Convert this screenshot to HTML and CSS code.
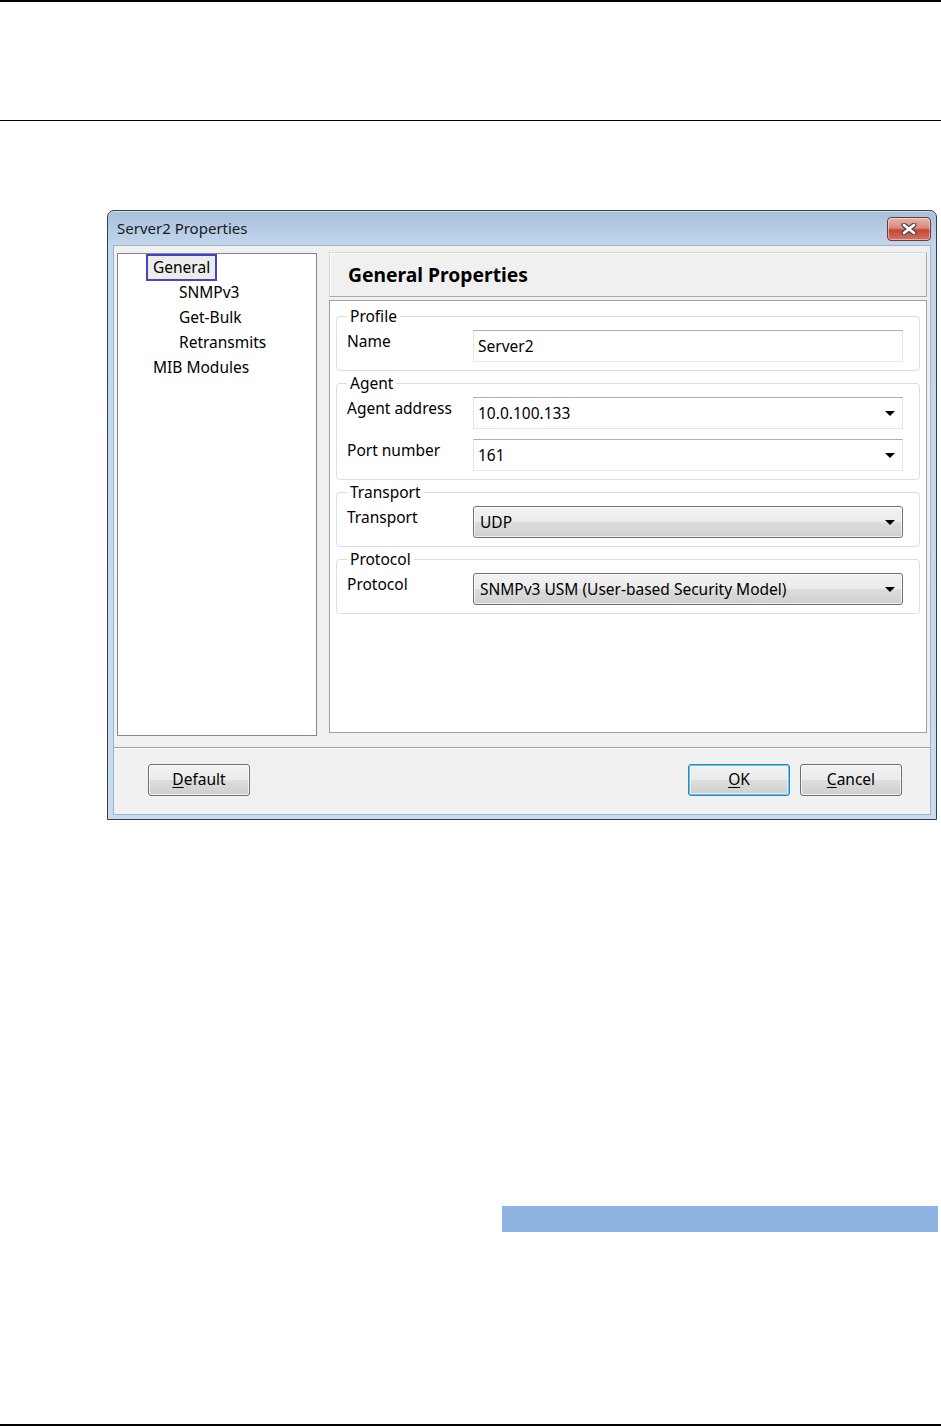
FILE: index.html
```html
<!DOCTYPE html>
<html lang="en">

<head>
  <meta charset="UTF-8" />
  <title>Server2 Properties</title>
  <link rel="stylesheet" href="styles.css">
</head>

<body>
  <div class="page">
    <header class="page-head"></header>

    <div class="figure">
      <div class="window">
        <div class="titlebar">
          <span class="title">Server2 Properties</span>
          <button class="close-btn" aria-label="Close">
            <svg width="18" height="12" viewBox="0 0 18 12">
              <path d="M4 2 L14 10 M14 2 L4 10" stroke="#4b4b4b" stroke-width="5" stroke-linecap="round" />
              <path d="M4 2 L14 10 M14 2 L4 10" stroke="#ffffff" stroke-width="2.6" stroke-linecap="round" />
            </svg>
          </button>
        </div>

        <div class="client">
          <div class="main">
            <ul class="tree">
              <li class="node"><span class="selected">General</span></li>
              <li class="node child"><span>SNMPv3</span></li>
              <li class="node child"><span>Get-Bulk</span></li>
              <li class="node child"><span>Retransmits</span></li>
              <li class="node"><span>MIB Modules</span></li>
            </ul>

            <div class="pane">
              <div class="pane-head">General Properties</div>
              <div class="pane-body">
                <fieldset class="group">
                  <legend>Profile</legend>
                  <div class="row">
                    <label>Name</label>
                    <div class="field">Server2</div>
                  </div>
                </fieldset>

                <fieldset class="group">
                  <legend>Agent</legend>
                  <div class="row">
                    <label>Agent address</label>
                    <div class="field combo">10.0.100.133<span class="arrow"></span></div>
                  </div>
                  <div class="row">
                    <label>Port number</label>
                    <div class="field combo">161<span class="arrow"></span></div>
                  </div>
                </fieldset>

                <fieldset class="group">
                  <legend>Transport</legend>
                  <div class="row">
                    <label>Transport</label>
                    <div class="select">UDP<span class="arrow"></span></div>
                  </div>
                </fieldset>

                <fieldset class="group">
                  <legend>Protocol</legend>
                  <div class="row">
                    <label>Protocol</label>
                    <div class="select">SNMPv3 USM (User-based Security Model)<span class="arrow"></span></div>
                  </div>
                </fieldset>
              </div>
            </div>
          </div>

          <div class="separator"></div>

          <div class="actions">
            <button class="btn"><u>D</u>efault</button>
            <div class="spacer"></div>
            <button class="btn default"><u>O</u>K</button>
            <button class="btn"><u>C</u>ancel</button>
          </div>
        </div>
      </div>
    </div>

    <div class="caption-bar"></div>
  </div>
</body>

</html>
```

FILE: styles.css
```css
* {
  box-sizing: border-box;
}

body {
  margin: 0;
  background: #fff;
  font-family: "Noto Sans", "Open Sans", sans-serif;
  font-size: 15.5px;
  color: #000;
}

.page {
  position: relative;
  width: 941px;
  height: 1426px;
  border-top: 2px solid #000;
  border-bottom: 2px solid #000;
}

.page-head {
  height: 119px;
  border-bottom: 1px solid #000;
}

.figure {
  padding: 89px 0 0 107px;
}

/* window frame */
.window {
  width: 830px;
  height: 610px;
  border: 1px solid #35404c;
  border-radius: 7px 7px 0 0;
  background: linear-gradient(180deg, #a7c0dc 0%, #c2d6ec 34px, #c8dbef 100%);
  padding: 0 5px 4px;
  display: flex;
  flex-direction: column;
  box-shadow: inset 0 1px 0 rgba(255, 255, 255, 0.5);
}

.titlebar {
  height: 34px;
  flex-shrink: 0;
  display: flex;
  align-items: center;
  justify-content: space-between;
  padding-left: 4px;
}

.title {
  color: #1a1a1a;
  font-size: 15px;
}

.close-btn {
  width: 44px;
  height: 24px;
  margin-top: 1px;
  border: 1px solid #6b3a38;
  border-radius: 4px;
  padding: 0;
  display: flex;
  align-items: center;
  justify-content: center;
  background: linear-gradient(180deg, #e9b2a8 0%, #d88a7e 45%, #c2473a 55%, #d5725f 100%);
  box-shadow: inset 0 0 0 1px rgba(255, 255, 255, 0.45);
}

.client {
  flex: 1;
  background: #f0f0f0;
  border: 1px solid #9fb3c8;
  display: flex;
  flex-direction: column;
}

.main {
  display: flex;
  gap: 12px;
  padding: 6px 3px 0 3px;
}

/* tree */
.tree {
  list-style: none;
  margin: 1px 0 0;
  padding: 1px 0 0;
  width: 200px;
  height: 483px;
  background: #fff;
  border: 1px solid #828790;
}

.node {
  height: 25px;
  display: flex;
  align-items: center;
  padding-left: 30px;
}

.node.child {
  padding-left: 56px;
}

.node span {
  padding: 0 5px;
  line-height: 23px;
}

.node .selected {
  background: #ececec;
  outline: 2px solid #4343c9;
  outline-offset: 0;
}

/* right pane */
.pane {
  flex: 1;
  display: flex;
  flex-direction: column;
  gap: 3px;
}

.pane-head {
  height: 45px;
  display: flex;
  align-items: center;
  padding-left: 18px;
  font-size: 19.3px;
  font-weight: 700;
  background: #f0f0f0;
  border: 1px solid #d6d6d6;
  border-right-color: #a9a9a9;
  border-bottom-color: #a9a9a9;
  box-shadow: inset 1px 1px 0 #fff;
}

.pane-body {
  height: 433px;
  background: #fff;
  border: 1px solid #a0a0a0;
  padding: 5px 6px 0;
}

.group {
  margin: 0 0 2px;
  padding: 4px 16px 8px 10px;
  border: 1px solid #d5dfe5;
  border-radius: 4px;
  display: flex;
  flex-direction: column;
  gap: 10px;
}

.group legend {
  padding: 0 3px;
  line-height: 20px;
}

.row {
  display: flex;
  align-items: flex-start;
}

.row label {
  width: 126px;
  flex-shrink: 0;
}

.field {
  position: relative;
  flex: 1;
  height: 32px;
  display: flex;
  align-items: center;
  padding-left: 4px;
  border: 1px solid #e2e3ea;
  border-top-color: #abadb3;
  border-bottom-color: #e3e9ef;
  background: #fff;
}

.select {
  position: relative;
  flex: 1;
  height: 32px;
  display: flex;
  align-items: center;
  padding-left: 6px;
  border: 1px solid #707070;
  border-radius: 3px;
  background: linear-gradient(180deg, #f2f2f2 0%, #ebebeb 50%, #dddddd 51%, #cfcfcf 100%);
  box-shadow: inset 0 0 0 1px rgba(255, 255, 255, 0.7);
}

.arrow {
  position: absolute;
  right: 7px;
  top: 50%;
  margin-top: -2px;
  width: 0;
  height: 0;
  border-left: 5px solid transparent;
  border-right: 5px solid transparent;
  border-top: 5px solid #000;
}

.separator {
  margin-top: 11px;
  height: 2px;
  border-top: 1px solid #a0a0a0;
  border-bottom: 1px solid #fff;
}

.actions {
  display: flex;
  gap: 10px;
  padding: 15px 28px 0 34px;
}

.spacer {
  flex: 1;
}

.btn {
  width: 102px;
  height: 32px;
  font: inherit;
  color: #000;
  border: 1px solid #707070;
  border-radius: 3px;
  background: linear-gradient(180deg, #f2f2f2 0%, #ebebeb 50%, #dddddd 51%, #cfcfcf 100%);
  box-shadow: inset 0 0 0 1px rgba(255, 255, 255, 0.7);
  padding: 0 0 2px;
}

.btn u {
  text-underline-offset: 2px;
}

.btn.default {
  border-color: #3c7fb1;
  box-shadow: inset 0 0 0 1px #48cffe, inset 0 0 0 2px rgba(255, 255, 255, 0.5);
}

.caption-bar {
  margin: 386px 0 0 502px;
  width: 436px;
  height: 26px;
  background: #8eb2e1;
}
```
